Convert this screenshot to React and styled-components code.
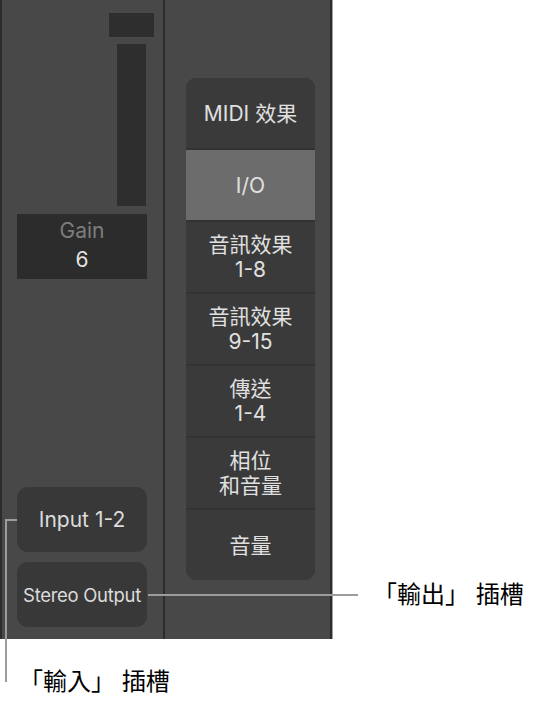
import React from "react";
import styled, { createGlobalStyle, css } from "styled-components";

const Global = createGlobalStyle`
  html, body { margin: 0; padding: 0; background: #ffffff; }
  body { font-family: Inter, "Noto Sans CJK TC", sans-serif; }
`;

const FONT = `Inter, "Noto Sans CJK TC", sans-serif`;

const Page = styled.div`
  width: 543px;
  height: 705px;
  display: grid;
  grid-template-columns: 333px 1fr;
  grid-template-rows: 639px auto;
  background: #ffffff;
  overflow: hidden;
`;

const Panel = styled.div`
  display: flex;
  height: 639px;
  background: #484848;
  border-left: 2px solid #2c2c2c;
  border-right: 2px solid #2c2c2c;
  box-shadow: 1px 0 0 #a0a0a0;
  box-sizing: border-box;
  width: 332px;
`;

const Strip = styled.div`
  display: flex;
  flex-direction: column;
  box-sizing: border-box;
  height: 100%;
`;

const ChannelStrip = styled(Strip)`
  width: 163px;
  padding: 13px 0 12px 15px;
  border-right: 2px solid #2c2c2c;
`;

const MenuStrip = styled(Strip)`
  flex: 1;
  padding: 78px 0 0 21px;
`;

const Peak = styled.div`
  align-self: flex-end;
  width: 45px;
  height: 24px;
  margin-right: 9px;
  background: #2e2e2e;
`;

const Meter = styled.div`
  align-self: flex-end;
  width: 29px;
  height: 162px;
  margin-top: 7px;
  margin-right: 17px;
  background: #2e2e2e;
`;

const GainBox = styled.div`
  width: 130px;
  height: 65px;
  margin-top: 8px;
  padding-bottom: 3px;
  box-sizing: border-box;
  background: #2c2c2c;
  display: flex;
  flex-direction: column;
  align-items: center;
  justify-content: center;
  font-family: ${FONT};
  font-size: 21px;
  line-height: 29px;
`;

const GainLabel = styled.span`
  color: #7d7d7d;
`;

const GainValue = styled.span`
  color: #e4e4e4;
`;

const Spacer = styled.div`
  flex: 1;
`;

const calloutLeft = css`
  &::before {
    content: "";
    position: absolute;
    left: -12px;
    top: 32px;
    width: 12px;
    height: 2px;
    background: #9c9c9c;
  }
  &::after {
    content: "";
    position: absolute;
    left: -12px;
    top: 32px;
    width: 2px;
    height: 163px;
    background: #9c9c9c;
  }
`;

const calloutRight = css`
  &::after {
    content: "";
    position: absolute;
    left: 131px;
    top: 32px;
    width: 210px;
    height: 2px;
    background: #9c9c9c;
  }
`;

const SlotButton = styled.div`
  position: relative;
  width: 130px;
  height: 65px;
  border-radius: 11px;
  background: #383838;
  display: flex;
  align-items: center;
  justify-content: center;
  color: #dcdcdc;
  font-family: ${FONT};
  font-size: ${(p) => p.$size}px;
  letter-spacing: ${(p) => p.$tracking}px;
  white-space: nowrap;
  & + & {
    margin-top: 10px;
  }
  ${(p) => (p.$callout === "left" ? calloutLeft : p.$callout === "right" ? calloutRight : "")}
`;

const Menu = styled.div`
  width: 129px;
  display: flex;
  flex-direction: column;
  gap: 2px;
  background: #333333;
  border-radius: 11px;
  overflow: hidden;
`;

const MenuItem = styled.div`
  height: 70px;
  display: flex;
  align-items: center;
  justify-content: center;
  text-align: center;
  background: ${(p) => (p.$active ? "#6c6c6c" : "#3a3a3a")};
  color: #e0e0e0;
  font-family: ${FONT};
  font-size: 21px;
  line-height: 25px;
  white-space: pre-line;
`;

const Callout = styled.div`
  font-family: ${FONT};
  font-size: 24px;
  line-height: 28px;
  color: #000000;
  white-space: pre;
`;

const OutputCallout = styled(Callout)`
  padding: 581px 0 0 40px;
  grid-row: 1;
  grid-column: 2;
`;

const InputCallout = styled(Callout)`
  grid-row: 2;
  grid-column: 1 / span 2;
  padding: 29px 0 0 19px;
`;

const items = [
  { label: "MIDI 效果" },
  { label: "I/O", active: true },
  { label: "音訊效果\n1-8" },
  { label: "音訊效果\n9-15" },
  { label: "傳送\n1-4" },
  { label: "相位\n和音量" },
  { label: "音量" },
];

export default function App() {
  return (
    <>
      <Global />
      <Page>
        <Panel>
          <ChannelStrip>
            <Peak />
            <Meter />
            <GainBox>
              <GainLabel>Gain</GainLabel>
              <GainValue>6</GainValue>
            </GainBox>
            <Spacer />
            <SlotButton $size={21} $tracking={0} $callout="left">
              Input 1-2
            </SlotButton>
            <SlotButton $size={18.5} $tracking={-0.3} $callout="right">
              Stereo Output
            </SlotButton>
          </ChannelStrip>
          <MenuStrip>
            <Menu>
              {items.map((it) => (
                <MenuItem key={it.label} $active={it.active}>
                  {it.label}
                </MenuItem>
              ))}
            </Menu>
          </MenuStrip>
        </Panel>
        <OutputCallout>「輸出」 插槽</OutputCallout>
        <InputCallout>「輸入」 插槽</InputCallout>
      </Page>
    </>
  );
}
